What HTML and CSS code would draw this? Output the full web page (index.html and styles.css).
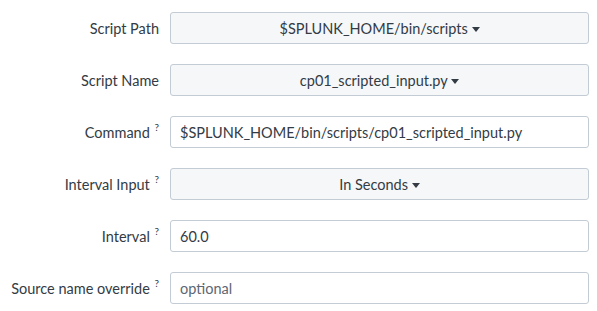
FILE: index.html
```html
<!DOCTYPE html>
<html lang="en">
<head>
    <meta charset="UTF-8">
    <title>Scripted Input</title>
    <link rel="stylesheet" href="styles.css">
</head>
<body>
    <form class="input-form">
        <div class="form-row">
            <label class="form-label">Script Path</label>
            <button type="button" class="dropdown">$SPLUNK_HOME/bin/scripts <span class="caret"></span></button>
        </div>
        <div class="form-row">
            <label class="form-label">Script Name</label>
            <button type="button" class="dropdown">cp01_scripted_input.py <span class="caret"></span></button>
        </div>
        <div class="form-row">
            <label class="form-label">Command <sup class="help">?</sup></label>
            <input type="text" class="text-input" value="$SPLUNK_HOME/bin/scripts/cp01_scripted_input.py">
        </div>
        <div class="form-row">
            <label class="form-label">Interval Input <sup class="help">?</sup></label>
            <button type="button" class="dropdown">In Seconds <span class="caret"></span></button>
        </div>
        <div class="form-row">
            <label class="form-label">Interval <sup class="help">?</sup></label>
            <input type="text" class="text-input" value="60.0">
        </div>
        <div class="form-row">
            <label class="form-label">Source name override <sup class="help">?</sup></label>
            <input type="text" class="text-input" placeholder="optional">
        </div>
    </form>
</body>
</html>
```

FILE: styles.css
```css
body {
    margin: 0;
    padding: 12px 8px 0 0;
    font-family: Lato, "Liberation Sans", sans-serif;
    font-size: 14.5px;
    color: #333b44;
    background-color: #ffffff;
}
.input-form {
    display: flex;
    flex-direction: column;
    gap: 20px;
}
.form-row {
    display: flex;
    align-items: center;
    height: 32px;
}
.form-label {
    width: 170px;
    text-align: right;
    padding-right: 11px;
    box-sizing: border-box;
    flex-shrink: 0;
}
.help {
    font-size: 10px;
    color: #333b44;
    vertical-align: 7px;
    line-height: 0;
    margin-left: 1px;
}
.dropdown,
.text-input {
    flex: 1;
    height: 32px;
    box-sizing: border-box;
    border: 1px solid #c3cbd4;
    border-radius: 3px;
    font-family: inherit;
    font-size: 14.5px;
    color: #333b44;
    margin: 0;
}
.dropdown {
    background-color: #f5f7f9; /* light grey select */
    text-align: center;
    padding: 0 10px;
}
.caret {
    display: inline-block;
    width: 0;
    height: 0;
    border-left: 4px solid transparent;
    border-right: 4px solid transparent;
    border-top: 5px solid #333b44;
    vertical-align: 2px;
}
.text-input {
    background-color: #ffffff;
    padding: 0 9px;
}
.text-input::placeholder {
    color: #5c6773;
}
```
